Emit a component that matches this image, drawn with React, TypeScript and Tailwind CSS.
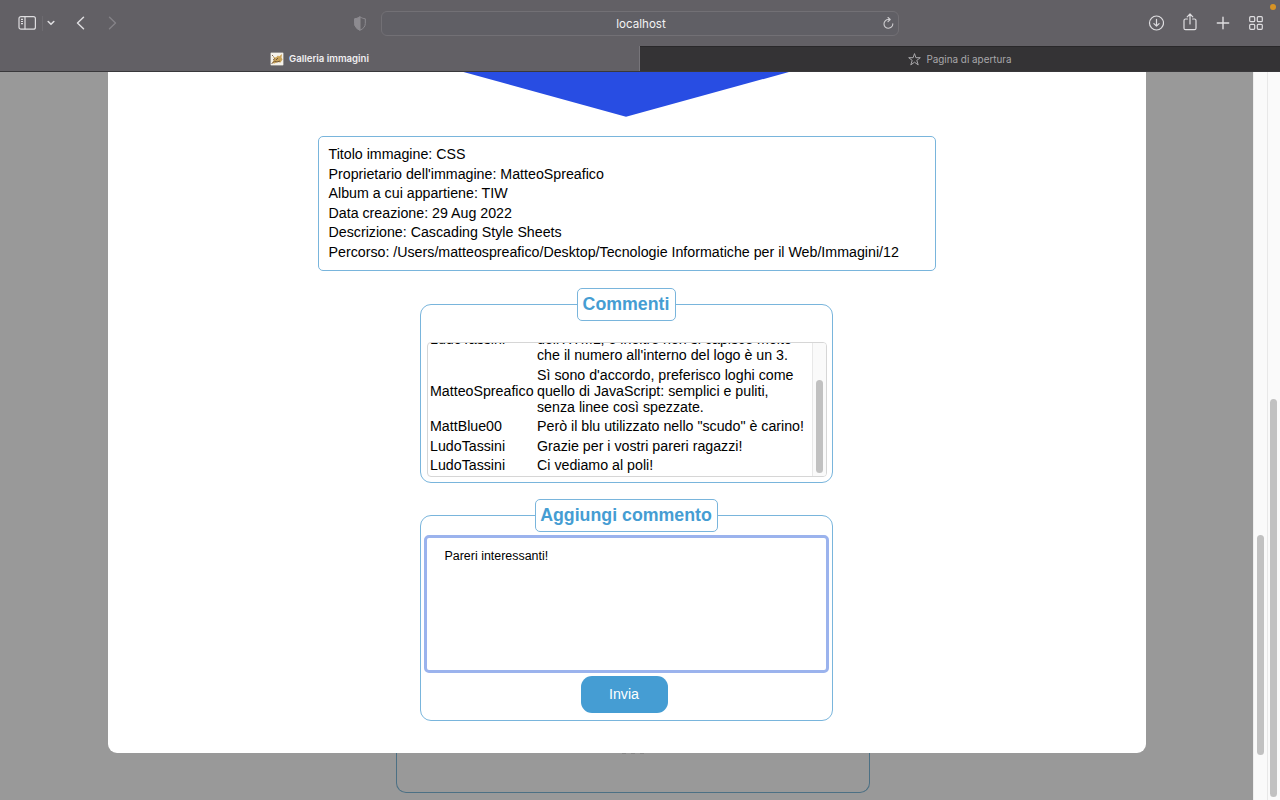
import React from "react";

const info = [
  "Titolo immagine: CSS",
  "Proprietario dell'immagine: MatteoSpreafico",
  "Album a cui appartiene: TIW",
  "Data creazione: 29 Aug 2022",
  "Descrizione: Cascading Style Sheets",
  "Percorso: /Users/matteospreafico/Desktop/Tecnologie Informatiche per il Web/Immagini/12",
];

const comments = [
  { user: "LudoTassini", lines: ["", "dell'HTML, e inoltre non si capisce molto", "che il numero all'interno del logo è un 3."] },
  { user: "MatteoSpreafico", lines: ["Sì sono d'accordo, preferisco loghi come", "quello di JavaScript: semplici e puliti,", "senza linee così spezzate."] },
  { user: "MattBlue00", lines: ["Però il blu utilizzato nello \"scudo\" è carino!"] },
  { user: "LudoTassini", lines: ["Grazie per i vostri pareri ragazzi!"] },
  { user: "LudoTassini", lines: ["Ci vediamo al poli!"] },
];

function Toolbar() {
  return (
    <div className="flex h-[46px] items-center text-[#dedde0]">
      <div className="flex w-[381px] items-center pl-[18px]">
        <svg width="19" height="16" viewBox="0 0 19 16" fill="none" stroke="currentColor" strokeWidth="1.2">
          <rect x="1" y="1.6" width="16.4" height="12.6" rx="2" />
          <path d="M7 1.6v12.6M3 4.4h2M3 6.5h2M3 8.6h2" />
        </svg>
        <div className="ml-[5px] h-[15px] w-px bg-[#6d6b70]" />
        <svg className="ml-1" width="8" height="6" viewBox="0 0 8 6" fill="none" stroke="currentColor" strokeWidth="1.6" strokeLinecap="round" strokeLinejoin="round">
          <path d="M1.2 1.5 4 4.3l2.8-2.8" />
        </svg>
        <svg className="ml-[21px]" width="10" height="14" viewBox="0 0 10 14" fill="none" stroke="currentColor" strokeWidth="1.5" strokeLinecap="round" strokeLinejoin="round">
          <path d="M7.500 1.300 1.500 7l6 5.700" />
        </svg>
        <svg className="ml-[22px] text-[#858388]" width="10" height="14" viewBox="0 0 10 14" fill="none" stroke="currentColor" strokeWidth="1.4" strokeLinecap="round" strokeLinejoin="round">
          <path d="m1.500 1.300 6 5.700-6 5.700" />
        </svg>
        <svg className="ml-[235px] text-[#8d8b90]" width="14" height="15" viewBox="0 0 14 15" fill="none" stroke="currentColor" strokeWidth="1">
          <path d="M7 .8c1.7 1.2 3.4 1.8 5.3 2v4.6c0 3.1-1.8 5.3-5.3 6.8-3.5-1.5-5.3-3.7-5.3-6.8V2.8c1.900-.2 3.600-.8 5.300-2Z" />
          <path d="M7 .8v13.400c-3.500-1.500-5.300-3.700-5.300-6.800V2.800c1.900-.2 3.600-.8 5.300-2Z" fill="currentColor" />
        </svg>
      </div>
      <div className="flex h-[25px] w-[518px] items-center rounded-[6px] border border-[#727075] bg-[#605f65]">
        <div className="flex-1 pt-px pl-[18px] text-center font-['Inter',sans-serif] text-[11.600px] leading-4 text-[#f3f3f4]">localhost</div>
        <svg className="mr-[3px] text-[#cfced1]" width="13" height="13" viewBox="0 0 13 13" fill="none" stroke="currentColor" strokeWidth="1.1" strokeLinecap="round" strokeLinejoin="round">
          <path d="M10.800 6.800a4.400 4.400 0 1 1-4.400-4.300h1.400M6 .5l2.200 2L6 4.600" />
        </svg>
      </div>
      <div className="flex flex-1 items-center justify-end gap-[18px] pr-[16px]">
        <svg width="16" height="16" viewBox="0 0 16 16" fill="none" stroke="currentColor" strokeWidth="1.2" strokeLinecap="round" strokeLinejoin="round">
          <circle cx="8.500" cy="8" r="7" />
          <path d="M8.500 4.300v6.800M5.900 8.600l2.600 2.600 2.600-2.600" />
        </svg>
        <svg className="-mt-[2px]" width="16" height="18" viewBox="0 0 16 18" fill="none" stroke="currentColor" strokeWidth="1.200" strokeLinecap="round" strokeLinejoin="round">
          <path d="M5.400 6H3.600C2.600 6 2 6.600 2 7.500v7.700c0 1 .6 1.500 1.600 1.500h8.800c1 0 1.600-.5 1.600-1.500V7.500c0-.9-.6-1.500-1.600-1.500h-1.800M8 11V1.200M5.200 3.800 8 1l2.800 2.800" />
        </svg>
        <svg width="14" height="14" viewBox="0 0 14 14" fill="none" stroke="currentColor" strokeWidth="1.400" strokeLinecap="round">
          <path d="M7 1.300v11.400M1.300 7h11.400" />
        </svg>
        <svg width="16" height="16" viewBox="0 0 16 16" fill="none" stroke="currentColor" strokeWidth="1.200">
          <rect x="1.700" y="1.700" width="5" height="5" rx="1" />
          <rect x="9.300" y="1.700" width="5" height="5" rx="1" />
          <rect x="1.700" y="9.300" width="5" height="5" rx="1" />
          <rect x="9.300" y="9.300" width="5" height="5" rx="1" />
        </svg>
      </div>
    </div>
  );
}

function Tabs() {
  return (
    <div className="flex h-[26px] border-b border-[#39383b] font-['Inter',sans-serif] leading-4">
      <div className="flex w-[640px] items-center justify-center gap-[5px] border-r border-[#77757a] pt-px text-[9.600px] font-semibold text-[#f0eff1]">
        <svg width="14" height="14" viewBox="0 0 14 14">
          <rect width="14" height="14" fill="#3d3b40" />
          <rect x=".5" y=".5" width="13" height="13" fill="#f4f1ea" />
          <path d="m2 11 2.500-4L3 5l3 .5L8 3.500l1 1L12 2l-.5 3.500 1 2-2 3-3-.5-3 1.500Z" fill="#c9a257" />
          <path d="m1.500 12 3-3 2.500 1 3-1M2 3l1.500 1.500M6 8l2-2M3 8l2-1.500" stroke="#6b5238" strokeWidth=".9" fill="none" />
        </svg>
        <span>Galleria immagini</span>
      </div>
      <div className="flex flex-1 items-center justify-center gap-[5px] border-t border-[#29282a] bg-[#343335] text-[9.900px] text-[#a9a8ab]">
        <svg width="13" height="13" viewBox="0 0 13 13" fill="none" stroke="currentColor" strokeWidth="1" strokeLinejoin="round">
          <path d="m6.500.6 1.400 4.100h4.400L8.800 7.400l1.400 4.500-3.700-2.700-3.700 2.700 1.400-4.500L.7 4.700h4.400Z" />
        </svg>
        <span>Pagina di apertura</span>
      </div>
    </div>
  );
}

function Comments() {
  return (
    <fieldset className="mt-[17px] h-[195px] w-[413px] rounded-[11px] border border-[#79b5dc] px-[6px]">
      <legend className="mx-auto flex h-[33px] w-[99px] items-center justify-center rounded-[5px] border border-[#79b5dc] text-[17.780px] font-bold text-[#459dd3]">Commenti</legend>
      <div className="mt-[21px] -mr-px flex h-[135px] rounded-[4px] border border-[#d6d6d6]">
        <div className="flex h-[133px] flex-1 flex-col justify-end gap-[1.780px] overflow-hidden pb-[2px] pl-[2.500px]">
          {comments.map((c, i) => (
            <div key={i} className="flex shrink-0 items-center py-[0.890px] leading-[16px]">
              <div className="w-[107px] shrink-0">{c.user}</div>
              <div className="whitespace-nowrap">
                {c.lines.map((line, n) => (
                  <div key={n} className="h-[16px]">{line}</div>
                ))}
              </div>
            </div>
          ))}
        </div>
        <div className="w-[14px] rounded-r-[3px] border-l border-[#e8e8e8] bg-[#fafafa] pt-[37px] pl-[3px]">
          <div className="h-[93px] w-[7px] rounded-full bg-[#c1c1c1]" />
        </div>
      </div>
    </fieldset>
  );
}

function AddComment() {
  return (
    <fieldset className="mt-[16px] h-[222px] w-[413px] rounded-[11px] border border-[#79b5dc] px-[3px]">
      <legend className="mx-auto flex h-[33px] w-[183px] items-center justify-center rounded-[5px] border border-[#79b5dc] text-[17.780px] font-bold text-[#459dd3]">Aggiungi commento</legend>
      <textarea
        className="mt-[3px] block h-[138px] w-full resize-none rounded-[5px] border-[3px] border-[#9bb3ed] bg-white px-[18px] py-[10px] text-[12.440px] leading-[16px] outline-none"
        defaultValue="Pareri interessanti!"
      />
      <button className="mt-[3px] ml-[157px] block h-[37px] w-[87px] rounded-[11px] bg-[#459dd3] text-[14.220px] text-white">Invia</button>
    </fieldset>
  );
}

export default function App() {
  return (
    <div className="relative flex h-[800px] w-[1280px] flex-col overflow-hidden bg-[#626065]">
      <Toolbar />
      <Tabs />
      <div className="absolute top-[4px] right-[4px] h-[6px] w-[6px] rounded-full bg-[#d69324]" />
      <div className="flex h-[728px] font-['Liberation_Sans',Arial,sans-serif] text-[14.220px] text-black">
        <main className="flex w-[1253px] flex-col items-center bg-[#999999]">
          <div className="flex h-[681px] w-[1038px] shrink-0 flex-col items-center rounded-b-[9px] bg-white pr-px">
            <svg className="shrink-0" width="327" height="45" viewBox="0 0 327 45">
              <path d="M.5 0h325.500L163 44.700Z" fill="#284de3" />
            </svg>
            <div className="mt-[19px] ml-px h-[135px] w-[618px] shrink-0 rounded-[5px] border border-[#79b5dc] pt-[8px] pl-[10px]">
              {info.map((line) => (
                <div key={line} className="h-[19.560px] leading-[19.560px] whitespace-nowrap">{line}</div>
              ))}
            </div>
            <Comments />
            <AddComment />
          </div>
          <div className="ml-[13px] flex h-[40px] w-[474px] shrink-0 justify-center gap-[5px] rounded-b-[10px] border border-t-0 border-[#4c7084]">
            <div className="h-px w-[4px] bg-[#858585]" />
            <div className="h-px w-[4px] bg-[#858585]" />
            <div className="h-px w-[4px] bg-[#858585]" />
          </div>
        </main>
        <div className="w-[14px] border-l border-[#eeeeee] bg-[#fafafa] pt-[463px] pl-[3px]">
          <div className="h-[220px] w-[7px] rounded-full bg-[#c1c1c1]" />
        </div>
        <div className="w-[13px] border-l border-[#e8e8e8] bg-[#fafafa] pt-[327px] pl-[2px]">
          <div className="h-[398px] w-[7px] rounded-full bg-[#c1c1c1]" />
        </div>
      </div>
    </div>
  );
}
